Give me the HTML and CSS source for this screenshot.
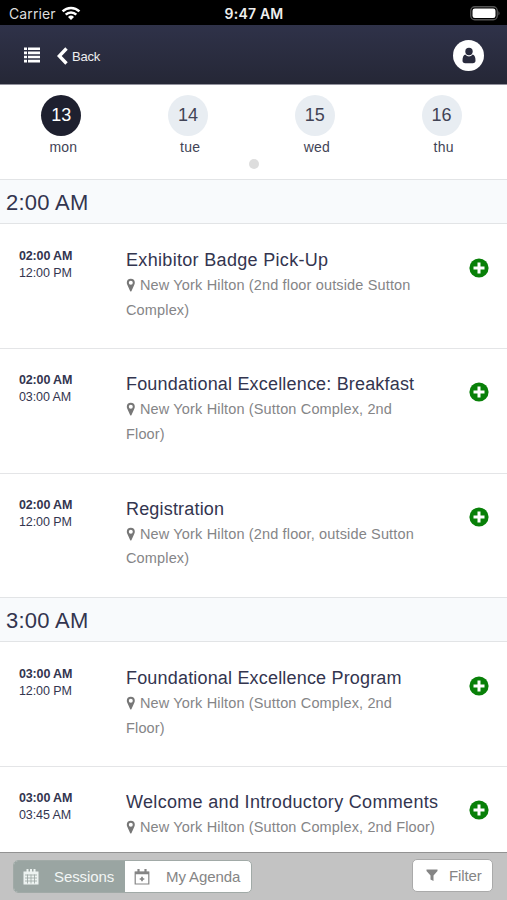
FILE: index.html
```html
<!DOCTYPE html>
<html lang="en">
<head>
<meta charset="utf-8">
<title>Sessions</title>
<link rel="stylesheet" href="styles.css">
</head>
<body>
<svg width="0" height="0" class="defs">
  <symbol id="pin" viewBox="0 0 10 14"><path fill-rule="evenodd" d="M4.800 0.800a4 4 0 0 0-4 4c0 .8.2 1.400.5 2L4.100 13q.7 1 1.400 0l2.800-6.200c.3-.6.5-1.200.5-2a4 4 0 0 0-4-4zM4.800 2.800a2 2 0 1 1 0 4 2 2 0 0 1 0-4z"/></symbol>
  <symbol id="plus" viewBox="0 0 20 20"><circle cx="10" cy="10" r="9.600" fill="#088008"/><path d="M10 4.500v11M4.500 10h11" stroke="#fff" stroke-width="3"/></symbol>
</svg>
<div class="app">
  <div class="status">
    <div class="carrier">Carrier
      <svg width="20" height="15" viewBox="0 0 20 15" fill="none" stroke="#fff" stroke-width="2.500"><path d="M1.600 5.400a12 12 0 0 1 16.800 0M4.700 8.600a7.500 7.500 0 0 1 10.600 0"/><path d="M10 14l-3-3.100a4.300 4.300 0 0 1 6 0z" fill="#fff" stroke="none"/></svg>
    </div>
    <div class="clock">9:47 AM</div>
    <svg class="battery" width="31" height="15" viewBox="0 0 31 15"><rect x=".75" y=".75" width="26.500" height="13" rx="4" fill="none" stroke="#555" stroke-width="1.300"/><rect x="2.500" y="2.500" width="23" height="9.500" rx="2.300" fill="#fff"/><path d="M28.500 5q2 2.300 0 4.600z" fill="#666"/></svg>
  </div>
  <header class="nav">
    <svg class="menu" width="16" height="16" viewBox="0 0 16 16" fill="#fff"><path d="M0 .5h3v2.600H0zM4 .5h12v2.600H4zM0 4.600h3v2.600H0zM4 4.600h12v2.600H4zM0 8.700h3v2.600H0zM4 8.700h12v2.600H4zM0 12.800h3v2.600H0zM4 12.800h12v2.600H4z"/></svg>
    <div class="back"><svg width="11" height="18" viewBox="0 0 11 18"><path d="M9.500 1.500 2.300 9l7.200 7.500" fill="none" stroke="#fff" stroke-width="3.400"/></svg><span>Back</span></div>
    <div class="avatar"><svg width="14" height="17" viewBox="0 0 14 17" fill="#292b3d"><circle cx="7" cy="4.500" r="3.700"/><path d="M3.200 7.600Q.5 8.500.5 13.500q0 2.800 2.700 2.800h7.600q2.700 0 2.700-2.800 0-5-2.700-5.900Q9 9.500 7 9.500T3.200 7.600z"/></svg></div>
  </header>
  <section class="days">
    <div class="day-row">
      <div class="day active"><b>13</b><span>mon</span></div>
      <div class="day"><b>14</b><span>tue</span></div>
      <div class="day"><b>15</b><span>wed</span></div>
      <div class="day"><b>16</b><span>thu</span></div>
    </div>
    <i class="dot"></i>
  </section>
  <main class="list">
    <h2>2:00 AM</h2>
    <article><div class="time"><b>02:00 AM</b><span>12:00 PM</span></div><div class="info"><h3>Exhibitor Badge Pick-Up</h3><p><svg class="pin"><use href="#pin"/></svg>New York Hilton (2nd floor outside Sutton<br>Complex)</p></div><svg class="add"><use href="#plus"/></svg></article>
    <article><div class="time"><b>02:00 AM</b><span>03:00 AM</span></div><div class="info"><h3 class="snug">Foundational Excellence: Breakfast</h3><p><svg class="pin"><use href="#pin"/></svg>New York Hilton (Sutton Complex, 2nd<br>Floor)</p></div><svg class="add"><use href="#plus"/></svg></article>
    <article><div class="time"><b>02:00 AM</b><span>12:00 PM</span></div><div class="info"><h3 class="snug">Registration</h3><p><svg class="pin"><use href="#pin"/></svg>New York Hilton (2nd floor, outside Sutton<br>Complex)</p></div><svg class="add"><use href="#plus"/></svg></article>
    <h2>3:00 AM</h2>
    <article><div class="time"><b>03:00 AM</b><span>12:00 PM</span></div><div class="info"><h3 class="snug">Foundational Excellence Program</h3><p><svg class="pin"><use href="#pin"/></svg>New York Hilton (Sutton Complex, 2nd<br>Floor)</p></div><svg class="add"><use href="#plus"/></svg></article>
    <article><div class="time"><b>03:00 AM</b><span>03:45 AM</span></div><div class="info"><h3>Welcome and Introductory Comments</h3><p><svg class="pin"><use href="#pin"/></svg>New York Hilton (Sutton Complex, 2nd Floor)</p></div><svg class="add"><use href="#plus"/></svg></article>
  </main>
  <footer class="bar">
    <div class="tabs">
      <div class="tab on"><svg width="16" height="16" viewBox="0 0 16 16"><path d="M.5 2.500h15v13H.5z" fill="#edf3f1"/><path d="M4.500 0v4M8 0v4M11.500 0v4" stroke="#edf3f1" stroke-width="2"/><path d="M2 6h12M2 9h12M2 12h12M4.500 5.500v9M8 5.500v9M11.500 5.500v9" stroke="#9aa5a2" stroke-width=".8"/></svg><span>Sessions</span></div>
      <div class="tab"><svg width="16" height="16" viewBox="0 0 16 16" fill="none" stroke="#858585"><path d="M1.200 3h13.600v12H1.200z" stroke-width="1.200"/><path d="M1 4h14" stroke-width="2.400"/><path d="M4.500 0v4M11.500 0v4" stroke-width="2.200"/><path d="M8 7.700v4.600M5.700 10h4.600" stroke-width="1.700"/></svg><span>My Agenda</span></div>
    </div>
    <div class="filter"><svg width="12" height="13" viewBox="0 0 12 13" fill="#858585"><path d="M.5.5h11v1.500L7.500 6.500V12L4.500 10.500v-4L.5 2z"/></svg><span>Filter</span></div>
  </footer>
</div>
</body>
</html>
```
FILE: styles.css
```css
* { box-sizing: border-box; }
body { margin: 0; font-family: "Liberation Sans", Arial, sans-serif; color: #33354f; background: #fff; }
svg { display: block; flex: none; }
.defs { display: none; }
.app { height: 900px; display: flex; flex-direction: column; overflow: hidden; }
.status { height: 25px; flex: none; background: #000; color: #fff; display: grid; grid-template-columns: 1fr auto 1fr; align-items: center; padding: 2px 6px 0 9px; font-family: Inter, sans-serif; font-size: 14px; }
.carrier { display: flex; align-items: center; gap: 5px; color: #ddd; letter-spacing: .1px; }
.clock { font-weight: 600; color: #eee; letter-spacing: .2px; margin-right: 2px; }
.battery { justify-self: end; }
.nav { height: 60px; flex: none; display: flex; align-items: center; padding: 1px 23px 0 24px; background: linear-gradient(#2f3249, #252736); border-bottom: 1px solid #92929d; }
.menu { margin-bottom: 1px; }
.back { display: flex; align-items: center; gap: 4px; margin: 2px 0 0 17px; color: #eee; font-size: 13px; letter-spacing: -.2px; }
.avatar { margin-left: auto; width: 31px; height: 31px; border-radius: 50%; background: #fff; display: grid; place-items: center; }
.days { height: 94px; flex: none; padding-top: 10px; }
.day-row { display: grid; grid-template-columns: repeat(4, 1fr); }
.day { display: flex; flex-direction: column; align-items: center; color: #424456; }
.day b { width: 40px; height: 41px; margin-right: 4px; border-radius: 50%; background: #e8edf2; display: grid; place-items: center; font-size: 18px; font-weight: 400; }
.day.active b { background: #1e202f; color: #fff; }
.day span { font-size: 14px; line-height: 20px; letter-spacing: .2px; padding-top: 1px; }
.dot { display: block; width: 10px; height: 10px; margin: 2px auto 0; border-radius: 50%; background: #ddd; }
.list { flex: 1; min-height: 0; overflow: hidden; }
h2 { margin: 0; height: 45px; padding-left: 6px; border: solid #e2e4e6; border-width: 1px 0; background: #f8fafc; font-size: 22px; font-weight: 400; letter-spacing: .25px; line-height: 45px; }
article { height: 124.500px; display: flex; align-items: flex-start; padding: 22px 18px 0 19px; border-top: 1px solid #e4e5e7; }
h2 + article { height: 124px; border-top: 0; padding-top: 23px; }
.time { width: 107px; padding-top: 1px; font-size: 12.500px; line-height: 17px; }
.time b, .time span { display: block; }
.time b { letter-spacing: -.15px; }
.time span { letter-spacing: -.1px; }
.info { flex: 1; white-space: nowrap; }
h3 { margin: 0; font-size: 18px; font-weight: 400; letter-spacing: .32px; line-height: 26px; }
.snug { letter-spacing: .18px; }
p { margin: 0; color: #858587; font-size: 14.500px; letter-spacing: .15px; line-height: 24.500px; }
.pin { display: inline-block; width: 10px; height: 14px; margin: 0 4px 0 0; vertical-align: -2px; fill: #777; }
.add { width: 20px; height: 20px; margin-top: 11px; }
.bar { height: 48px; flex: none; display: flex; align-items: flex-start; justify-content: space-between; padding: 7px 14px 0 13px; background: #c3c3c3; border-top: 1px solid #929292; font-size: 15px; letter-spacing: -.1px; color: #858585; }
.tabs { width: 239px; height: 33px; display: flex; border: 1px solid #a1aaa7; border-radius: 5px; overflow: hidden; background: #fff; }
.tab { flex: 1; display: flex; align-items: center; padding-left: 9px; white-space: nowrap; }
.tab.on { flex: 0 0 111px; background: #9aa5a2; color: #f2f6f5; }
.tab span { margin-left: 16px; }
.tab.on span { margin-left: 15px; }
.filter { width: 81px; height: 33px; margin-top: -1px; display: flex; align-items: center; padding-left: 13px; border: 1px solid #aaa; border-radius: 5px; background: #fff; }
.filter span { margin-left: 11px; }
```
